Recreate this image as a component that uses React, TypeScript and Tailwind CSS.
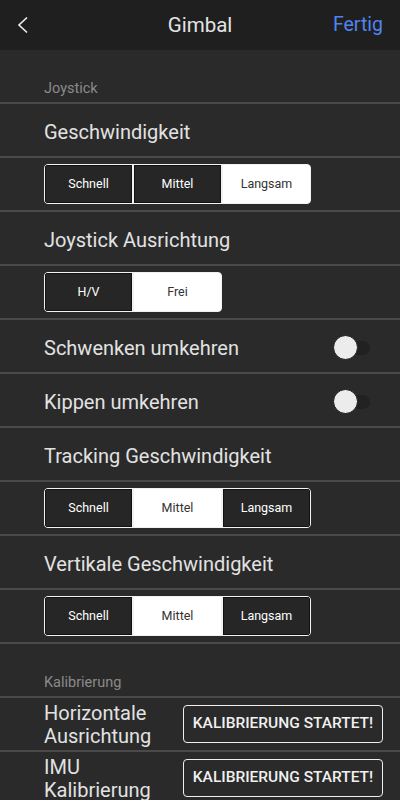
import React from "react";

const font = { fontFamily: "Roboto, 'Noto Sans', sans-serif" };

function Segmented({ options, active }: { options: string[]; active: number }) {
  return (
    <div className="flex h-[40px] rounded-[4px] border-[1.5px] border-[#f2f2f2] bg-[#f2f2f2] overflow-hidden gap-[2px]">
      {options.map((o, i) => (
        <div
          key={o}
          className={
            i === active
              ? "w-[87px] flex items-center justify-center bg-white text-[#333] text-[12.5px]"
              : "w-[87px] flex items-center justify-center bg-[#262626] text-white text-[12.5px] border border-[#111]"
          }
        >
          {o}
        </div>
      ))}
    </div>
  );
}

function Toggle() {
  return (
    <div className="relative w-[37px] h-[26px] flex items-center">
      <div className="absolute left-[1px] w-[36px] h-[14px] rounded-full bg-[#212121]" />
      <div className="absolute left-0 w-[25px] h-[25px] rounded-full bg-[#ececec] border border-[#1a1a1a]" />
    </div>
  );
}

function SectionLabel({ text }: { text: string }) {
  return (
    <div className="h-[54px] border-b-2 border-[#4a4a4a] flex items-end pl-[44px] pb-[2px]">
      <span className="text-[14.5px] text-[#8a8a8a]">{text}</span>
    </div>
  );
}

function TitleRow({ text, right }: { text: string; right?: React.ReactNode }) {
  return (
    <div className="h-[54px] border-b-2 border-[#4a4a4a] flex items-center justify-between pl-[44px] pr-[30px] pt-[3px]">
      <span className="text-[20px] text-[#e2e2e2]">{text}</span>
      {right}
    </div>
  );
}

function ControlRow({ children }: { children: React.ReactNode }) {
  return (
    <div className="h-[54px] border-b-2 border-[#4a4a4a] flex items-center pl-[44px]">{children}</div>
  );
}

function CalRow({ l1, l2 }: { l1: string; l2: string }) {
  return (
    <div className="h-[54px] border-b-2 border-[#4a4a4a] flex items-center justify-between pl-[44px] pr-[17px]">
      <div className="text-[20px] text-[#e2e2e2] leading-[23px] pt-[1px]">
        <div>{l1}</div>
        <div>{l2}</div>
      </div>
      <div className="w-[200px] h-[38px] rounded-[4px] border-[1.5px] border-[#eeeeee] flex items-center justify-center text-[15.5px] font-medium text-[#f0f0f0]">
        KALIBRIERUNG STARTET!
      </div>
    </div>
  );
}

export default function App() {
  return (
    <div className="w-[400px] h-[800px] overflow-hidden bg-[#2a2a2a]" style={font}>
      <div className="relative h-[50px] bg-[#1f1f1f] flex items-center justify-between px-[17px]">
        <svg width="12" height="18" viewBox="0 0 12 18">
          <polyline points="10,1.5 2,9 10,16.5" fill="none" stroke="#f0f0f0" strokeWidth="1.6" />
        </svg>
        <span className="absolute left-0 right-0 text-center text-[20.5px] text-[#e4e4e4] pointer-events-none">Gimbal</span>
        <span className="text-[19.5px] text-[#4f84f2]">Fertig</span>
      </div>
      <SectionLabel text="Joystick" />
      <TitleRow text="Geschwindigkeit" />
      <ControlRow>
        <Segmented options={["Schnell", "Mittel", "Langsam"]} active={2} />
      </ControlRow>
      <TitleRow text="Joystick Ausrichtung" />
      <ControlRow>
        <Segmented options={["H/V", "Frei"]} active={1} />
      </ControlRow>
      <TitleRow text="Schwenken umkehren" right={<Toggle />} />
      <TitleRow text="Kippen umkehren" right={<Toggle />} />
      <TitleRow text="Tracking Geschwindigkeit" />
      <ControlRow>
        <Segmented options={["Schnell", "Mittel", "Langsam"]} active={1} />
      </ControlRow>
      <TitleRow text="Vertikale Geschwindigkeit" />
      <ControlRow>
        <Segmented options={["Schnell", "Mittel", "Langsam"]} active={1} />
      </ControlRow>
      <SectionLabel text="Kalibrierung" />
      <CalRow l1="Horizontale" l2="Ausrichtung" />
      <CalRow l1="IMU" l2="Kalibrierung" />
    </div>
  );
}
